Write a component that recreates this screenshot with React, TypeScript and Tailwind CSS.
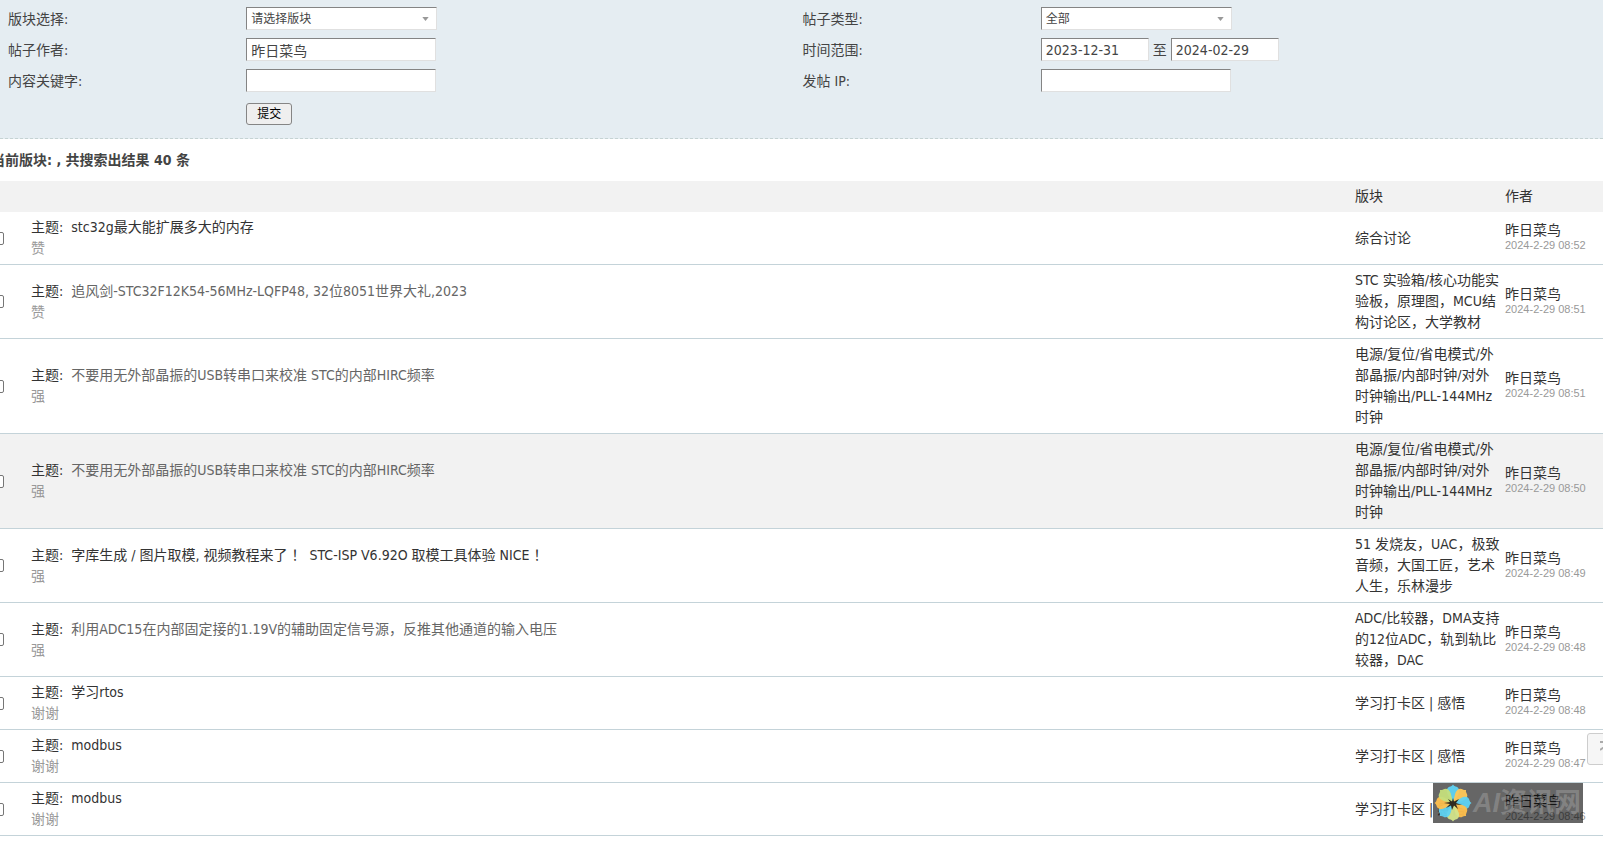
import { useState } from "react";

interface Post {
  id: number;
  title: string;
  // titles of threads that were already opened are drawn lighter
  visited?: boolean;
  hovered?: boolean;
  excerpt: string;
  forum: string;
  date: string;
}

const AUTHOR = "昨日菜鸟";

const POSTS: Post[] = [
  { id: 1, title: "stc32g最大能扩展多大的内存", excerpt: "赞", forum: "综合讨论", date: "2024-2-29 08:52" },
  {
    id: 2,
    title: "追风剑-STC32F12K54-56MHz-LQFP48, 32位8051世界大礼,2023",
    visited: true,
    excerpt: "赞",
    forum: "STC 实验箱/核心功能实验板，原理图，MCU结构讨论区，大学教材",
    date: "2024-2-29 08:51",
  },
  {
    id: 3,
    title: "不要用无外部晶振的USB转串口来校准 STC的内部HIRC频率",
    visited: true,
    excerpt: "强",
    forum: "电源/复位/省电模式/外部晶振/内部时钟/对外时钟输出/PLL-144MHz时钟",
    date: "2024-2-29 08:51",
  },
  {
    id: 4,
    title: "不要用无外部晶振的USB转串口来校准 STC的内部HIRC频率",
    visited: true,
    hovered: true,
    excerpt: "强",
    forum: "电源/复位/省电模式/外部晶振/内部时钟/对外时钟输出/PLL-144MHz时钟",
    date: "2024-2-29 08:50",
  },
  {
    id: 5,
    title: "字库生成 / 图片取模, 视频教程来了 ！ STC-ISP V6.92O 取模工具体验 NICE ！",
    excerpt: "强",
    forum: "51 发烧友，UAC，极致音频，大国工匠，艺术人生，乐林漫步",
    date: "2024-2-29 08:49",
  },
  {
    id: 6,
    title: "利用ADC15在内部固定接的1.19V的辅助固定信号源，反推其他通道的输入电压",
    visited: true,
    excerpt: "强",
    forum: "ADC/比较器，DMA支持的12位ADC，轨到轨比较器，DAC",
    date: "2024-2-29 08:48",
  },
  { id: 7, title: "学习rtos", excerpt: "谢谢", forum: "学习打卡区 | 感悟", date: "2024-2-29 08:48" },
  { id: 8, title: "modbus", excerpt: "谢谢", forum: "学习打卡区 | 感悟", date: "2024-2-29 08:47" },
  { id: 9, title: "modbus", excerpt: "谢谢", forum: "学习打卡区 | 感悟", date: "2024-2-29 08:46" },
];

// clockwise from the top
const PETALS = ["#5fd3f3", "#ffc857", "#5fd3f3", "#ffc04d", "#d3e58a", "#5fd3f3", "#ffc04d", "#c5df7c"];

const FIELD =
  "h-[23px] border border-t-[#848484] border-r-[#e0e0e0] border-b-[#e0e0e0] border-l-[#848484] bg-white px-1 text-[#444] outline-none";

const LABEL = "pt-0.5";

function SelectField({ id, options }: { id: string; options: string[] }) {
  return (
    <div className="relative w-[191px]">
      <select id={id} className={`${FIELD} block w-full appearance-none text-xs`}>
        {options.map((o) => (
          <option key={o}>{o}</option>
        ))}
      </select>
      <svg
        viewBox="0 0 8 5"
        className="pointer-events-none absolute top-2.5 right-2 h-1 w-[7px] fill-[#999]"
        aria-hidden
      >
        <path d="M0 0h8L4 5z" />
      </svg>
    </div>
  );
}

function SearchForm() {
  const [author, setAuthor] = useState(AUTHOR);
  const [from, setFrom] = useState("2023-12-31");
  const [to, setTo] = useState("2024-02-29");

  return (
    <form
      onSubmit={(e) => e.preventDefault()}
      className="border-b border-dashed border-[#c5d3d3] bg-[#e5edf2] pt-[7px] pr-1.5 pb-[13px] pl-2"
    >
      <div className="grid grid-cols-[15%_35%_15%_35%] items-center gap-y-2">
        <label htmlFor="forum" className={LABEL}>
          版块选择:
        </label>
        <SelectField id="forum" options={["请选择版块"]} />
        <label htmlFor="kind" className={LABEL}>
          帖子类型:
        </label>
        <SelectField id="kind" options={["全部"]} />

        <label htmlFor="author" className={LABEL}>
          帖子作者:
        </label>
        <input
          id="author"
          value={author}
          onChange={(e) => setAuthor(e.target.value)}
          className={`${FIELD} w-[190px]`}
        />
        <label htmlFor="from" className={LABEL}>
          时间范围:
        </label>
        <div className="flex items-center gap-1">
          <input
            id="from"
            value={from}
            onChange={(e) => setFrom(e.target.value)}
            className={`${FIELD} w-[108px]`}
          />
          <label htmlFor="to" className={LABEL}>
            至
          </label>
          <input
            id="to"
            value={to}
            onChange={(e) => setTo(e.target.value)}
            className={`${FIELD} w-[108px]`}
          />
        </div>

        <label htmlFor="keyword" className={LABEL}>
          内容关键字:
        </label>
        <input id="keyword" className={`${FIELD} w-[190px]`} />
        <label htmlFor="ip" className={LABEL}>
          发帖 IP:
        </label>
        <input id="ip" className={`${FIELD} w-[190px]`} />

        <button
          type="submit"
          className="col-start-2 mt-[3px] h-[22px] w-[46px] rounded-[3px] border border-[#858585] bg-[#efefef] text-xs leading-5 text-black"
        >
          提交
        </button>
      </div>
    </form>
  );
}

function PostRow({ post }: { post: Post }) {
  return (
    <tr className={`border-b border-[#c4d3d9] ${post.hovered ? "bg-[#f2f2f2]" : ""}`}>
      <td className="py-[5px]">
        <input
          type="checkbox"
          aria-label={post.title}
          className="block size-[13px] appearance-none rounded-[2px] border border-[#767676] bg-white"
        />
      </td>
      <td className="py-[5px]">
        <p>
          <span className="mr-2">主题:</span>
          <a href="#" className={post.visited ? "text-[#666]" : "text-[#333]"}>
            {post.title}
          </a>
        </p>
        <p className="text-[#999]">{post.excerpt}</p>
      </td>
      <td className="py-[5px] pr-[3px]">
        <a href="#">{post.forum}</a>
      </td>
      <td className="py-[5px] leading-[15px]">
        <a href="#" className="block">
          {AUTHOR}
        </a>
        <span className="block font-['Liberation_Sans',sans-serif] text-[11px] text-[#999]">
          {post.date}
        </span>
      </td>
    </tr>
  );
}

function SiteBadge() {
  return (
    <div className="pointer-events-none absolute right-5 bottom-[19px] flex h-10 w-[150px] items-center bg-black/60">
      <svg viewBox="-20 -20 40 40" className="size-10 shrink-0" aria-hidden>
        {PETALS.map((fill, i) => (
          <path
            key={i}
            d="M0 0L-5 -8C-7.5 -13 -5.5 -16 -2.5 -16.5Q-0.8 -17 0 -18.5Q0.8 -17 2.5 -16.5C5.5 -16 7.5 -13 5 -8Z"
            fill={fill}
            fillOpacity={0.95}
            transform={`rotate(${i * 45})`}
          />
        ))}
        <path
          d="M0 -5L1 -1.5L6 -4L3 0L9 2L3 1.5L5 6L1 2.5L-1 7L-2 2.5L-7 5L-3 1L-9 0L-3 -1L-5 -4L-1 -1.5Z"
          fill="#2f2a20"
        />
      </svg>
      <span className="text-[27px] leading-8 font-bold whitespace-nowrap text-white/20">
        <i className="font-['Liberation_Sans',sans-serif]">AI</i>资讯网
      </span>
    </div>
  );
}

function BackToTop() {
  return (
    <button
      type="button"
      aria-label="返回顶部"
      className="absolute -right-6 bottom-[77px] flex h-8 w-10 items-center justify-center rounded-[3px] border border-[#cdcdcd] bg-[#f6f6f6]"
    >
      <svg viewBox="0 0 14 16" className="h-4 w-3.5 fill-none stroke-[#aaa] stroke-2" aria-hidden>
        <path d="M0 1h14M0 9l7-5 7 5M7 5v11" />
      </svg>
    </button>
  );
}

export default function App() {
  return (
    <div className="relative min-h-screen overflow-hidden bg-white font-['DejaVu_Sans_Condensed','Noto_Sans_CJK_SC',sans-serif] text-sm leading-[21px] text-[#444]">
      <SearchForm />

      {/* the list runs slightly past the left edge of the window */}
      <main className="-ml-[9px]">
        <h2 className="pt-[11px] pb-[10px] font-bold">当前版块: , 共搜索出结果 40 条</h2>
        <table className="w-full table-fixed border-collapse text-left text-[#333]">
          <colgroup>
            <col className="w-10" />
            <col />
            <col className="w-[150px]" />
            <col className="w-[98px]" />
          </colgroup>
          <thead>
            <tr className="bg-[#f2f2f2]">
              <th />
              <th />
              <th className="py-[5px] font-normal">版块</th>
              <th className="py-[5px] font-normal">作者</th>
            </tr>
          </thead>
          <tbody>
            {POSTS.map((post) => (
              <PostRow key={post.id} post={post} />
            ))}
          </tbody>
        </table>
      </main>

      <BackToTop />
      <SiteBadge />
    </div>
  );
}
